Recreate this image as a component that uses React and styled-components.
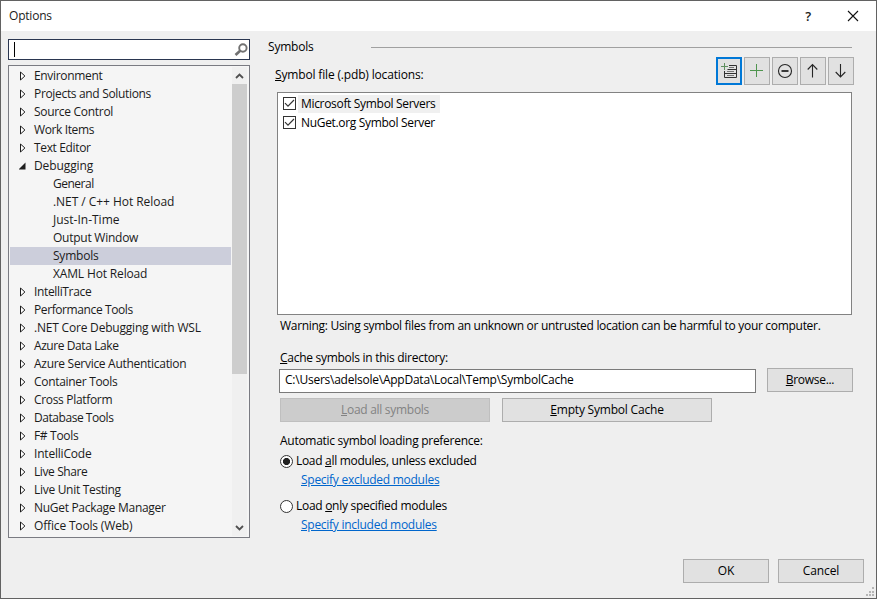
import { useState } from "react";
import styled, { createGlobalStyle } from "styled-components";

const treeItems = [
  { label: "Environment", spacing: -0.33 },
  { label: "Projects and Solutions", spacing: -0.33 },
  { label: "Source Control", spacing: -0.3 },
  { label: "Work Items", spacing: -0.38 },
  { label: "Text Editor", spacing: -0.35 },
  { label: "Debugging", spacing: -0.1, open: true },
  { label: "General", spacing: -0.5, child: true },
  { label: ".NET / C++ Hot Reload", spacing: -0.05, child: true },
  { label: "Just-In-Time", spacing: 0, child: true },
  { label: "Output Window", spacing: -0.25, child: true },
  { label: "Symbols", spacing: -0.22, child: true },
  { label: "XAML Hot Reload", spacing: -0.15, child: true },
  { label: "IntelliTrace", spacing: -0.35 },
  { label: "Performance Tools", spacing: -0.4 },
  { label: ".NET Core Debugging with WSL", spacing: -0.2 },
  { label: "Azure Data Lake", spacing: -0.42 },
  { label: "Azure Service Authentication", spacing: -0.29 },
  { label: "Container Tools", spacing: -0.31 },
  { label: "Cross Platform", spacing: -0.32 },
  { label: "Database Tools", spacing: -0.45 },
  { label: "F# Tools", spacing: -0.32 },
  { label: "IntelliCode", spacing: -0.2 },
  { label: "Live Share", spacing: -0.4 },
  { label: "Live Unit Testing", spacing: -0.3 },
  { label: "NuGet Package Manager", spacing: -0.3 },
  { label: "Office Tools (Web)", spacing: -0.16 },
];

const servers = ["Microsoft Symbol Servers", "NuGet.org Symbol Server"];

const Arrow = ({ open }) => (
  <svg width="8" height="10" viewBox="0 0 8 10">
    {open ? (
      <path d="M6.5 1.5v7h-7z" fill="#1e1e1e" />
    ) : (
      <path d="M1.5 1v8L5.9 5z" fill="#fff" stroke="#1e1e1e" />
    )}
  </svg>
);

const Chevron = ({ down }) => (
  <svg width="15" height="17" viewBox="0 0 15 17">
    <path
      d={down ? "M4 7l3.5 3.5L11 7" : "M4 11l3.5-3.5L11 11"}
      fill="none"
      stroke="#505050"
      strokeWidth="1.8"
    />
  </svg>
);

const SearchIcon = () => (
  <svg width="14" height="14" viewBox="0 0 14 14" fill="none" stroke="#717171">
    <circle cx="8.9" cy="5" r="3.7" strokeWidth="1.9" />
    <path d="M6.2 7.8L1.5 12" strokeWidth="2.7" />
  </svg>
);

const toolIcons = [
  <svg key="server" width="18" height="18" viewBox="0 0 18 18" fill="none">
    <path d="M9 3.5h7.5v12h-12V9M7.5 7.5h9M4.5 11.5h12" stroke="#303030" />
    <path d="M9 5.5h5M7 9.5h7M7 13.5h7" stroke="#777" />
    <path d="M4.5 1v7M1 4.5h7" stroke="#5f8f5f" />
  </svg>,
  <svg key="add" width="18" height="18" viewBox="0 0 18 18">
    <path d="M8.5 2v13M2 8.5h13" stroke="#4f954f" />
  </svg>,
  <svg key="remove" width="18" height="18" viewBox="0 0 18 18" fill="none">
    <circle cx="9" cy="9" r="6.5" stroke="#252525" strokeWidth="1.1" />
    <path d="M5.5 9h7" stroke="#252525" strokeWidth="1.8" />
  </svg>,
  <svg key="up" width="18" height="18" viewBox="0 0 18 18" fill="none">
    <path d="M8.5 15.5V3M3.7 7.5l4.8-5 4.8 5" stroke="#252525" strokeWidth="1.1" />
  </svg>,
  <svg key="down" width="18" height="18" viewBox="0 0 18 18" fill="none">
    <path d="M8.5 2v12.5M3.7 10l4.8 5 4.8-5" stroke="#252525" strokeWidth="1.1" />
  </svg>,
];

const App = () => {
  const [selected, setSelected] = useState("Symbols");
  const [mode, setMode] = useState("all");

  return (
    <>
      <GlobalStyle />
      <Dialog>
        <TitleBar>
          <Title>Options</Title>
          <Help>?</Help>
          <svg width="12" height="12" viewBox="0 0 12 12">
            <path d="M1 1l10 10M11 1L1 11" stroke="#111" strokeWidth="1.1" />
          </svg>
        </TitleBar>
        <Content>
          <Sidebar>
            <Search>
              <Caret />
              <SearchIcon />
            </Search>
            <Tree>
              <Items>
                {treeItems.map((item) => (
                  <Item
                    key={item.label}
                    $child={item.child}
                    $selected={item.label === selected}
                    onClick={() => setSelected(item.label)}
                  >
                    {!item.child && <Arrow open={item.open} />}
                    <Text $spacing={item.spacing}>{item.label}</Text>
                  </Item>
                ))}
              </Items>
              <Scrollbar>
                <Chevron />
                <Thumb />
                <Chevron down />
              </Scrollbar>
            </Tree>
          </Sidebar>
          <Panel>
            <Heading>
              <HeadingText>Symbols</HeadingText>
              <Rule />
            </Heading>
            <Toolbar>
              <Label>
                <u>S</u>ymbol file (.pdb) locations:
              </Label>
              <Tools>
                {toolIcons.map((icon, i) => (
                  <Tool key={icon.key} $focused={i === 0}>
                    {icon}
                  </Tool>
                ))}
              </Tools>
            </Toolbar>
            <List>
              {servers.map((name, i) => (
                <Server key={name}>
                  <Checkbox>
                    <svg width="11" height="11" viewBox="0 0 11 11">
                      <path d="M1 5.2l3 3 6-6.2" fill="none" stroke="#333" strokeWidth="1.2" />
                    </svg>
                  </Checkbox>
                  <ServerName $active={i === 0}>{name}</ServerName>
                </Server>
              ))}
            </List>
            <Warning>
              Warning: Using symbol files from an unknown or untrusted location can be
              harmful to your computer.
            </Warning>
            <CacheLabel>
              <u>C</u>ache symbols in this directory:
            </CacheLabel>
            <Row>
              <Path>C:\Users\adelsole\AppData\Local\Temp\SymbolCache</Path>
              <Button $width={86}>
                <Text $spacing={-0.3}>
                  <u>B</u>rowse...
                </Text>
              </Button>
            </Row>
            <CacheButtons>
              <Button $width={210} disabled>
                <Text $spacing={-0.29}>
                  <u>L</u>oad all symbols
                </Text>
              </Button>
              <Button $width={210}>
                <Text $spacing={-0.2}>
                  <u>E</u>mpty Symbol Cache
                </Text>
              </Button>
            </CacheButtons>
            <Preference>Automatic symbol loading preference:</Preference>
            <Option onClick={() => setMode("all")}>
              <Radio $checked={mode === "all"} />
              <Text $spacing={-0.31}>
                Load <u>a</u>ll modules, unless excluded
              </Text>
            </Option>
            <Link>Specify excluded modules</Link>
            <Option $second onClick={() => setMode("only")}>
              <Radio $checked={mode === "only"} />
              <Text $spacing={-0.29}>
                Load <u>o</u>nly specified modules
              </Text>
            </Option>
            <Link>Specify included modules</Link>
          </Panel>
        </Content>
        <Footer>
          <Button $width={86}>OK</Button>
          <Button $width={86}>Cancel</Button>
        </Footer>
        <Grip width="10" height="10" viewBox="0 0 10 10" fill="#b5b5b5">
          <path d="M7 0h2v2H7zM4 4h2v2H4zM7 4h2v2H7zM1 7h2v2H1zM4 7h2v2H4zM7 7h2v2H7z" />
        </Grip>
      </Dialog>
    </>
  );
};

export default App;

const GlobalStyle = createGlobalStyle`
  * {
    box-sizing: border-box;
  }
  body {
    margin: 0;
    overflow: hidden;
    font: 12px/18px "Open Sans", "Noto Sans", sans-serif;
    letter-spacing: -0.2px;
    color: #1b1b1b;
    white-space: nowrap;
  }
  svg {
    display: block;
    flex: none;
  }
  u {
    text-underline-offset: 1px;
  }
`;

const Text = styled.span`
  letter-spacing: ${(props) => props.$spacing}px;
`;

const Dialog = styled.div`
  position: relative;
  display: flex;
  flex-direction: column;
  width: 877px;
  height: 599px;
  background: #efefef;
  border: 1px solid #626262;
`;

const TitleBar = styled.div`
  display: flex;
  align-items: center;
  height: 30px;
  padding: 0 17px 0 8px;
  background: #fff;
`;

const Title = styled.div`
  flex: 1;
`;

const Help = styled.div`
  margin-right: 36px;
  font-size: 13px;
  font-weight: 600;
`;

const Content = styled.div`
  display: flex;
  height: 527px;
  padding: 8px 0 0 7px;
`;

const Sidebar = styled.div`
  width: 242px;
`;

const Search = styled.div`
  display: flex;
  align-items: center;
  justify-content: space-between;
  height: 21px;
  padding: 0 1px 0 5px;
  background: #fff;
  border: 1px solid #2a3650;
`;

const Caret = styled.div`
  width: 1px;
  height: 15px;
  background: #000;
`;

const Tree = styled.div`
  display: flex;
  height: 473px;
  margin-top: 5px;
  padding: 1px;
  background: #f5f5f5;
  border: 1px solid #7a7b82;
`;

const Items = styled.div`
  width: 221px;
`;

const Item = styled.div`
  display: flex;
  align-items: center;
  gap: 7px;
  height: 18px;
  padding-left: ${(props) => (props.$child ? "43px" : "9px")};
  background: ${(props) => (props.$selected ? "#cccedb" : "transparent")};
`;

const Scrollbar = styled.div`
  display: flex;
  flex-direction: column;
  width: 15px;
  margin-left: 1px;
  background: #f0f0f0;
`;

const Thumb = styled.div`
  height: 290px;
  margin-bottom: auto;
  background: #cdcdcd;
`;

const Panel = styled.div`
  display: flex;
  flex-direction: column;
  width: 585px;
  margin-left: 18px;
  color: #000;
`;

const Heading = styled.div`
  display: flex;
  height: 18px;
  align-items: flex-start;
`;

const HeadingText = styled.div`
  width: 103px;
  line-height: 16px;
`;

const Rule = styled.div`
  width: 481px;
  height: 1px;
  margin-top: 8px;
  background: #a0a0a0;
`;

const Toolbar = styled.div`
  display: flex;
  justify-content: space-between;
  align-items: flex-start;
  height: 35px;
  padding-left: 7px;
`;

const Label = styled.div`
  margin-top: 9px;
  letter-spacing: -0.16px;
`;

const Tools = styled.div`
  display: flex;
  gap: 2px;
  margin-right: -1px;
`;

const Tool = styled.div`
  display: flex;
  align-items: center;
  justify-content: center;
  width: 26px;
  height: 28px;
  background: #e1e1e1;
  border: ${(props) => (props.$focused ? "2px solid #0078d7" : "1px solid #adadad")};
`;

const List = styled.div`
  width: 575px;
  height: 223px;
  margin-left: 9px;
  padding: 1px 5px;
  background: #fff;
  border: 1px solid #828282;
`;

const Server = styled.div`
  display: flex;
  align-items: center;
  gap: 2px;
  height: 19px;
`;

const Checkbox = styled.div`
  width: 13px;
  height: 13px;
  border: 1px solid #333;
`;

const ServerName = styled.div`
  height: 18px;
  padding: 0 5px 0 3px;
  letter-spacing: -0.32px;
  background: ${(props) => (props.$active ? "#f0f0f0" : "transparent")};
`;

const Warning = styled.div`
  margin: 2px 0 0 12px;
  letter-spacing: -0.3px;
`;

const CacheLabel = styled.div`
  margin: 14px 0 0 12px;
  letter-spacing: -0.28px;
`;

const Row = styled.div`
  display: flex;
  align-items: flex-start;
  gap: 11px;
  margin: 1px 0 0 11px;
`;

const Path = styled.div`
  width: 477px;
  height: 24px;
  margin-top: 1px;
  padding-left: 5px;
  line-height: 20px;
  letter-spacing: -0.24px;
  background: #fff;
  border: 1px solid #7a7a7a;
`;

const Button = styled.button`
  width: ${(props) => props.$width}px;
  height: 24px;
  padding: 0;
  font: inherit;
  letter-spacing: -0.1px;
  color: #000;
  background: #e1e1e1;
  border: 1px solid #adadad;

  &:disabled {
    color: #838383;
    background: #cccccc;
    border-color: #bfbfbf;
  }
`;

const CacheButtons = styled.div`
  display: flex;
  gap: 12px;
  margin: 5px 0 0 12px;
`;

const Preference = styled.div`
  margin: 10px 0 0 12px;
  letter-spacing: -0.28px;
`;

const Option = styled.div`
  display: flex;
  align-items: center;
  gap: 3px;
  height: 20px;
  margin: ${(props) => (props.$second ? "7px" : "1px")} 0 0 12px;
`;

const Radio = styled.div`
  width: 13px;
  height: 13px;
  border: 1px solid #333;
  border-radius: 50%;
  background: ${(props) =>
    props.$checked ? "radial-gradient(circle, #222 3.2px, #fff 3.9px)" : "#fff"};
`;

const Link = styled.a`
  margin-left: 33px;
  height: 18px;
  align-self: flex-start;
  color: #0066cc;
  letter-spacing: -0.27px;
  text-decoration: underline;
  text-underline-offset: 1px;
`;

const Footer = styled.div`
  display: flex;
  justify-content: flex-end;
  gap: 9px;
  padding: 1px 12px 0 0;
`;

const Grip = styled.svg`
  position: absolute;
  right: 1px;
  bottom: 1px;
`;
